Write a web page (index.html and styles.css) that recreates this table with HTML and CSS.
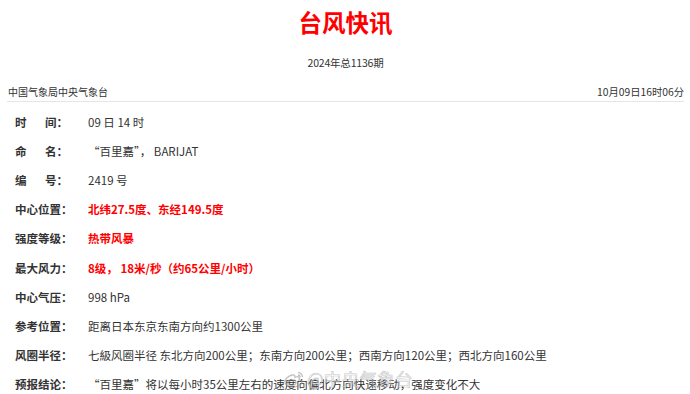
FILE: index.html
```html
<!DOCTYPE html>
<html lang="zh-CN">
<head>
<meta charset="utf-8">
<title>台风快讯</title>
<link rel="stylesheet" href="styles.css">
</head>
<body>
<div class="page">
  <div class="title"><span class="title-text">台风快讯</span></div>
  <div class="issue">2024年总1136期</div>
  <div class="meta">
    <span class="org">中国气象局中央气象台</span>
    <span class="stamp">10月09日16时06分</span>
  </div>
  <div class="rows">
    <div class="row"><div class="label">时<span class="gap"></span>间：</div><div class="value">09 日 14 时</div></div>
    <div class="row"><div class="label">命<span class="gap"></span>名：</div><div class="value">“百里嘉”，&nbsp;BARIJAT</div></div>
    <div class="row"><div class="label">编<span class="gap"></span>号：</div><div class="value">2419 号</div></div>
    <div class="row"><div class="label">中心位置：</div><div class="value red">北纬27.5度、东经149.5度</div></div>
    <div class="row"><div class="label">强度等级：</div><div class="value red">热带风暴</div></div>
    <div class="row"><div class="label">最大风力：</div><div class="value red">8级， 18米/秒（约65公里/小时）</div></div>
    <div class="row"><div class="label">中心气压：</div><div class="value">998 hPa</div></div>
    <div class="row"><div class="label">参考位置：</div><div class="value">距离日本东京东南方向约1300公里</div></div>
    <div class="row"><div class="label">风圈半径：</div><div class="value">七級风圈半径 东北方向200公里；东南方向200公里；西南方向120公里；西北方向160公里</div></div>
    <div class="row"><div class="label">预报结论：</div><div class="value">“百里嘉”将以每小时35公里左右的速度向偏北方向快速移动，强度变化不大</div></div>
  </div>
</div>
<div class="watermark">
  <svg class="wb" width="22" height="18" viewBox="0 0 22 18" fill="none" stroke="rgba(140,140,140,0.55)" stroke-width="1.3">
    <path d="M9 5C5 6 2 9 2 12c0 3 4 5 8 5s9-2 9-5c0-2-2-2-3-2 1-2 0-4-3-3l-1 .4C12 5 11 4.6 9 5z"/>
    <ellipse cx="9" cy="12.5" rx="4" ry="2.8"/>
    <path d="M15 2.5c2.5 0 4.5 2 4.5 4.5M15 5c1.2 0 2.2 1 2.2 2.2"/>
  </svg>
  <span class="wm-text">@中央气象台</span>
</div>
</body>
</html>
```
FILE: styles.css
```css
html, body {
  margin: 0;
  padding: 0;
  background: #ffffff;
}
body {
  font-family: "Noto Sans CJK SC", "Noto Sans", sans-serif;
  color: #333333;
  position: relative;
  width: 690px;
  height: 394px;
  overflow: hidden;
}
.page {
  padding: 0 6px 0 7px;
}
.title {
  height: 44px;
  line-height: 44px;
  text-align: center;
}
.title-text {
  font-size: 23.5px;
  font-weight: 700;
  color: #ff0000;
}
.issue {
  height: 38px;
  line-height: 38px;
  text-align: center;
  font-size: 10.5px;
  letter-spacing: -0.2px;
  color: #333;
}
.meta {
  display: flex;
  justify-content: space-between;
  align-items: center;
  height: 19px;
  padding-left: 1px;
  border-bottom: 1px solid #e6e6e6;
  font-size: 10px;
  color: #333;
}
.org {
  letter-spacing: 0;
}
.stamp {
  font-size: 10.3px;
}
.rows {
  padding-top: 5px;
}
.row {
  display: flex;
  align-items: center;
  height: 29.2px;
  font-size: 11.5px;
  white-space: nowrap;
}
.label {
  width: 81px;
  padding-left: 8px;
  box-sizing: border-box;
  font-weight: 700;
  color: #333;
  flex: none;
}
.gap {
  display: inline-block;
  width: 18.5px;
}
.value {
  color: #333;
}
.value.red {
  color: #ff0000;
  font-weight: 700;
}
.watermark {
  position: absolute;
  left: 283px;
  top: 367px;
  display: flex;
  align-items: center;
  gap: 2px;
  pointer-events: none;
}
.wm-text {
  font-size: 17.5px;
  line-height: 24px;
  color: rgba(255, 255, 255, 0.45);
  -webkit-text-stroke: 0.7px rgba(130, 130, 130, 0.45);
  letter-spacing: 0.3px;
}
```
